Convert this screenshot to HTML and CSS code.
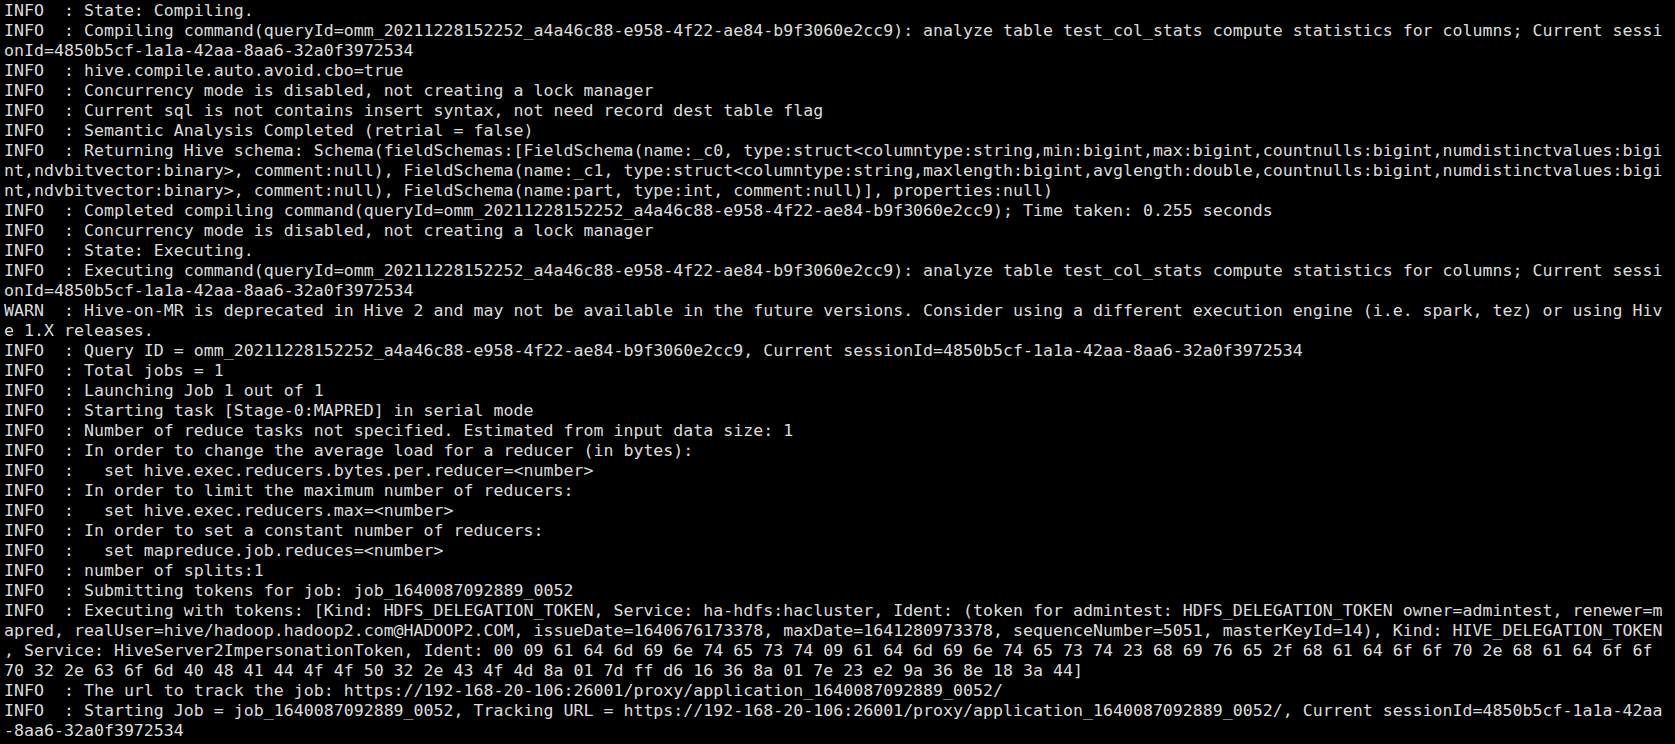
FILE: index.html
```html
<!DOCTYPE html>
<html>
<head>
<meta charset="utf-8">
<link rel="stylesheet" href="styles.css">
</head>
<body>
<pre class="term">INFO  : State: Compiling.
INFO  : Compiling command(queryId=omm_20211228152252_a4a46c88-e958-4f22-ae84-b9f3060e2cc9): analyze table test_col_stats compute statistics for columns; Current sessi
onId=4850b5cf-1a1a-42aa-8aa6-32a0f3972534
INFO  : hive.compile.auto.avoid.cbo=true
INFO  : Concurrency mode is disabled, not creating a lock manager
INFO  : Current sql is not contains insert syntax, not need record dest table flag
INFO  : Semantic Analysis Completed (retrial = false)
INFO  : Returning Hive schema: Schema(fieldSchemas:[FieldSchema(name:_c0, type:struct&lt;columntype:string,min:bigint,max:bigint,countnulls:bigint,numdistinctvalues:bigi
nt,ndvbitvector:binary&gt;, comment:null), FieldSchema(name:_c1, type:struct&lt;columntype:string,maxlength:bigint,avglength:double,countnulls:bigint,numdistinctvalues:bigi
nt,ndvbitvector:binary&gt;, comment:null), FieldSchema(name:part, type:int, comment:null)], properties:null)
INFO  : Completed compiling command(queryId=omm_20211228152252_a4a46c88-e958-4f22-ae84-b9f3060e2cc9); Time taken: 0.255 seconds
INFO  : Concurrency mode is disabled, not creating a lock manager
INFO  : State: Executing.
INFO  : Executing command(queryId=omm_20211228152252_a4a46c88-e958-4f22-ae84-b9f3060e2cc9): analyze table test_col_stats compute statistics for columns; Current sessi
onId=4850b5cf-1a1a-42aa-8aa6-32a0f3972534
WARN  : Hive-on-MR is deprecated in Hive 2 and may not be available in the future versions. Consider using a different execution engine (i.e. spark, tez) or using Hiv
e 1.X releases.
INFO  : Query ID = omm_20211228152252_a4a46c88-e958-4f22-ae84-b9f3060e2cc9, Current sessionId=4850b5cf-1a1a-42aa-8aa6-32a0f3972534
INFO  : Total jobs = 1
INFO  : Launching Job 1 out of 1
INFO  : Starting task [Stage-0:MAPRED] in serial mode
INFO  : Number of reduce tasks not specified. Estimated from input data size: 1
INFO  : In order to change the average load for a reducer (in bytes):
INFO  :   set hive.exec.reducers.bytes.per.reducer=&lt;number&gt;
INFO  : In order to limit the maximum number of reducers:
INFO  :   set hive.exec.reducers.max=&lt;number&gt;
INFO  : In order to set a constant number of reducers:
INFO  :   set mapreduce.job.reduces=&lt;number&gt;
INFO  : number of splits:1
INFO  : Submitting tokens for job: job_1640087092889_0052
INFO  : Executing with tokens: [Kind: HDFS_DELEGATION_TOKEN, Service: ha-hdfs:hacluster, Ident: (token for admintest: HDFS_DELEGATION_TOKEN owner=admintest, renewer=m
apred, realUser=hive/hadoop.hadoop2.com@HADOOP2.COM, issueDate=1640676173378, maxDate=1641280973378, sequenceNumber=5051, masterKeyId=14), Kind: HIVE_DELEGATION_TOKEN
, Service: HiveServer2ImpersonationToken, Ident: 00 09 61 64 6d 69 6e 74 65 73 74 09 61 64 6d 69 6e 74 65 73 74 23 68 69 76 65 2f 68 61 64 6f 6f 70 2e 68 61 64 6f 6f
70 32 2e 63 6f 6d 40 48 41 44 4f 4f 50 32 2e 43 4f 4d 8a 01 7d ff d6 16 36 8a 01 7e 23 e2 9a 36 8e 18 3a 44]
INFO  : The url to track the job: https://192-168-20-106:26001/proxy/application_1640087092889_0052/
INFO  : Starting Job = job_1640087092889_0052, Tracking URL = https://192-168-20-106:26001/proxy/application_1640087092889_0052/, Current sessionId=4850b5cf-1a1a-42aa
-8aa6-32a0f3972534</pre>
</body>
</html>
```

FILE: styles.css
```css
html, body {
  margin: 0;
  padding: 0;
  background: #000000;
  height: 100%;
  overflow: hidden;
}

.term {
  margin: 0;
  padding: 1px 0 0 4px;
  font-family: "DejaVu Sans Mono", "Liberation Mono", monospace;
  font-size: 16.6px;
  line-height: 20px;
  color: #dcdcdc;
  white-space: pre;
}
```
